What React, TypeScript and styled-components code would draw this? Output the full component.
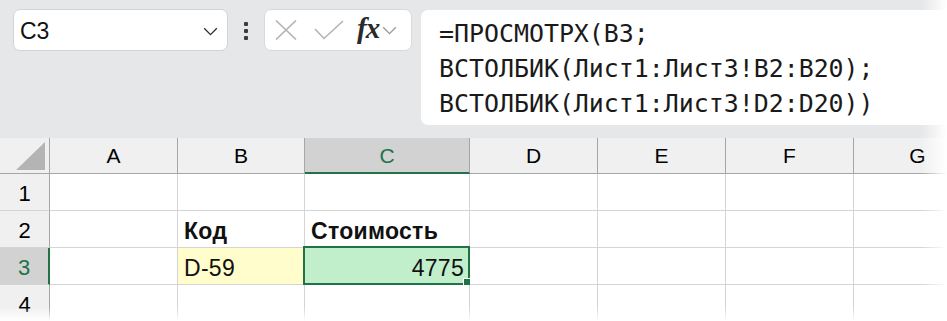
import React from "react";
import styled, { createGlobalStyle, css } from "styled-components";

const GlobalStyle = createGlobalStyle`
  html, body {
    margin: 0;
    padding: 0;
    background: #ffffff;
    overflow: hidden;
  }
`;

const green = "#217346";

const Page = styled.div`
  position: relative;
  width: 947px;
  height: 321px;
  overflow: hidden;
  font-family: "Liberation Sans", Arial, sans-serif;
  background: #ffffff;
`;

const Toolbar = styled.div`
  display: flex;
  align-items: flex-start;
  height: 138px;
  box-sizing: border-box;
  padding: 9px 0 0 13px;
  background: #e6e7e9;
`;

const NameBox = styled.div`
  display: flex;
  align-items: center;
  justify-content: space-between;
  width: 215px;
  height: 42px;
  box-sizing: border-box;
  padding: 2px 9px 0 6px;
  background: #ffffff;
  border: 1px solid #d2d3d5;
  border-radius: 7px;
  font-size: 23px;
  color: #111;
`;

const Kebab = styled.div`
  display: flex;
  flex-direction: column;
  gap: 3px;
  margin: 13px 16px 0 16px;

  span {
    display: block;
    width: 4px;
    height: 4px;
    border-radius: 1px;
    background: #3c3c3c;
  }
`;

const FuncBox = styled.div`
  display: flex;
  align-items: center;
  width: 148px;
  height: 42px;
  box-sizing: border-box;
  padding: 0 4px 0 10px;
  background: #ffffff;
  border: 1px solid #d8d9db;
  border-radius: 7px;
`;

const Gap = styled.span<{ $w: number }>`
  display: block;
  width: ${({ $w }) => $w}px;
`;

const Fx = styled.span`
  font-family: "Liberation Serif", "DejaVu Serif", serif;
  font-style: italic;
  font-weight: bold;
  font-size: 29px;
  color: #2a2a2a;
  margin: -3px 3px 0 13px;
  letter-spacing: -1px;
`;

const FormulaBox = styled.div`
  flex: 1;
  height: 115px;
  margin: 1px -20px 0 9px;
  box-sizing: border-box;
  padding: 6px 0 0 18px;
  background: #ffffff;
  border-radius: 7px;
  font-family: "DejaVu Sans Mono", "Liberation Mono", monospace;
  font-size: 24.9px;
  line-height: 35px;
  color: #1a1a1a;
  white-space: pre;
`;

const Grid = styled.div`
  display: grid;
  grid-template-columns: 50px 128px 127px 165px 128px 128px 128px 128px;
  grid-template-rows: 36px repeat(4, 37px);
  font-size: 23px;
  color: #111;
`;

const Corner = styled.div`
  display: flex;
  align-items: flex-end;
  justify-content: flex-end;
  padding: 0 4px 3px 0;
  box-sizing: border-box;
  background: #f0f0f0;
  border-right: 1px solid #a6a6a6;
  border-bottom: 1px solid #a6a6a6;
`;

const Triangle = styled.div`
  width: 29px;
  height: 28px;
  background: #b4b4b4;
  clip-path: polygon(100% 0, 100% 100%, 0 100%);
`;

const ColHead = styled.div<{ $active?: boolean }>`
  display: flex;
  align-items: center;
  justify-content: center;
  padding-top: 1px;
  box-sizing: border-box;
  font-size: 21px;
  color: #000;
  background: #f0f0f0;
  border-right: 1px solid #a6a6a6;
  border-bottom: 1px solid #a6a6a6;
  ${({ $active }) =>
    $active &&
    css`
      background: #d2d2d2;
      color: ${green};
      border-bottom: 2px solid ${green};
    `}
`;

const RowHead = styled.div<{ $active?: boolean }>`
  display: flex;
  align-items: center;
  justify-content: center;
  padding-top: 4px;
  box-sizing: border-box;
  font-size: 22px;
  color: #000;
  background: #f0f0f0;
  border-right: 1px solid #a6a6a6;
  border-bottom: 1px solid #d4d4d4;
  ${({ $active }) =>
    $active &&
    css`
      background: #d2d2d2;
      color: ${green};
      border-right: 2px solid ${green};
    `}
`;

const Cell = styled.div<{ $bg?: string; $bold?: boolean; $right?: boolean }>`
  position: relative;
  display: flex;
  align-items: center;
  justify-content: ${({ $right }) => ($right ? "flex-end" : "flex-start")};
  padding: 5px 5px 0 6px;
  box-sizing: border-box;
  background: ${({ $bg }) => $bg || "#ffffff"};
  font-weight: ${({ $bold }) => ($bold ? "bold" : "normal")};
  letter-spacing: 0.3px;
  border-right: 1px solid #d4d4d4;
  border-bottom: 1px solid #d4d4d4;
`;

const Selection = styled.div`
  position: absolute;
  inset: -2px -1px -1px -2px;
  border: 2px solid ${green};
  pointer-events: none;
`;

const Handle = styled.div`
  position: absolute;
  right: -4px;
  bottom: -4px;
  width: 7px;
  height: 7px;
  background: ${green};
  border: 1px solid #ffffff;
`;

const FadeRight = styled.div`
  position: absolute;
  top: 0;
  right: 0;
  width: 26px;
  height: 100%;
  background: linear-gradient(to right, rgba(255, 255, 255, 0), #ffffff);
  pointer-events: none;
`;

const FadeBottom = styled.div`
  position: absolute;
  left: 0;
  bottom: 0;
  width: 100%;
  height: 14px;
  background: linear-gradient(to bottom, rgba(255, 255, 255, 0), #ffffff);
  pointer-events: none;
`;

const Chevron = ({ color, w }: { color: string; w: number }) => (
  <svg width={w} height={w * 0.6} viewBox="0 0 16 10" fill="none">
    <path d="M1 1.5 L8 8.5 L15 1.5" stroke={color} strokeWidth="1.5" />
  </svg>
);

const Cancel = () => (
  <svg width="22" height="20" viewBox="0 0 22 20" fill="none">
    <path d="M1 0.5 L21 19.5 M21 0.5 L1 19.5" stroke="#b3b3b3" strokeWidth="1.6" />
  </svg>
);

const Confirm = () => (
  <svg width="30" height="20" viewBox="0 0 30 20" fill="none">
    <path d="M1 9 L10 18.5 L29 1" stroke="#b3b3b3" strokeWidth="1.6" />
  </svg>
);

const columns = ["A", "B", "C", "D", "E", "F", "G"];

const formula = `=ПРОСМОТРХ(B3;
ВСТОЛБИК(Лист1:Лист3!B2:B20);
ВСТОЛБИК(Лист1:Лист3!D2:D20))`;

type CellData = { text?: string; bg?: string; bold?: boolean; right?: boolean; selected?: boolean };

const rows: CellData[][] = [
  [{}, {}, {}, {}, {}, {}, {}],
  [{}, { text: "Код", bold: true }, { text: "Стоимость", bold: true }, {}, {}, {}, {}],
  [
    {},
    { text: "D-59", bg: "#fffdcc" },
    { text: "4775", bg: "#c2efcb", right: true, selected: true },
    {},
    {},
    {},
    {},
  ],
  [{}, {}, {}, {}, {}, {}, {}],
];

export default function App() {
  return (
    <Page>
      <GlobalStyle />
      <Toolbar>
        <NameBox>
          <span>C3</span>
          <Chevron color="#333" w={15} />
        </NameBox>
        <Kebab>
          <span />
          <span />
          <span />
        </Kebab>
        <FuncBox>
          <Cancel />
          <Gap $w={17} />
          <Confirm />
          <Fx>fx</Fx>
          <Chevron color="#9a9a9a" w={15} />
        </FuncBox>
        <FormulaBox>{formula}</FormulaBox>
      </Toolbar>
      <Grid>
        <Corner>
          <Triangle />
        </Corner>
        {columns.map((c) => (
          <ColHead key={c} $active={c === "C"}>
            {c}
          </ColHead>
        ))}
        {rows.map((row, i) => (
          <React.Fragment key={i}>
            <RowHead $active={i === 2}>{i + 1}</RowHead>
            {row.map((cell, j) => (
              <Cell key={j} $bg={cell.bg} $bold={cell.bold} $right={cell.right}>
                {cell.text}
                {cell.selected && (
                  <Selection>
                    <Handle />
                  </Selection>
                )}
              </Cell>
            ))}
          </React.Fragment>
        ))}
      </Grid>
      <FadeRight />
      <FadeBottom />
    </Page>
  );
}
